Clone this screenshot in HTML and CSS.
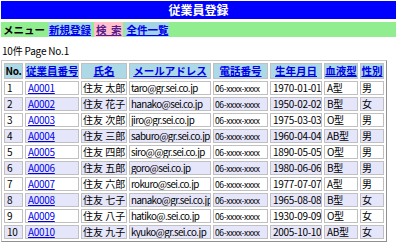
FILE: index.html
```html
<!DOCTYPE html>
<html lang="ja">
<head>
<meta charset="utf-8">
<title>従業員登録</title>
<link rel="stylesheet" href="styles.css">
</head>
<body>
<div class="title">従業員登録</div>
<div class="menu">
  <span class="mi mlabel">メニュー</span>
  <a class="mi mlink" href="#">新規登録</a>
  <a class="mi mlink visited" href="#">検&nbsp;索</a>
  <a class="mi mlink" href="#">全件一覧</a>
</div>
<p class="count">10件 Page No.1</p>
<table class="list">
  <thead>
    <tr>
      <th class="c-no">No.</th>
      <th class="c-id"><a href="#">従業員番号</a></th>
      <th class="c-name"><a href="#">氏名</a></th>
      <th class="c-mail"><a href="#">メールアドレス</a></th>
      <th class="c-tel"><a href="#">電話番号</a></th>
      <th class="c-birth"><a href="#">生年月日</a></th>
      <th class="c-blood"><a href="#">血液型</a></th>
      <th class="c-sex"><a href="#">性別</a></th>
    </tr>
  </thead>
  <tbody>
    <tr><td>1</td><td><a href="#">A0001</a></td><td class="jp">住友 太郎</td><td class="mail">taro@gr.sei.co.jp</td><td class="tel">06-xxxx-xxxx</td><td>1970-01-01</td><td>A型</td><td class="jp">男</td></tr>
    <tr class="alt"><td>2</td><td><a href="#">A0002</a></td><td class="jp">住友 花子</td><td class="mail">hanako@sei.co.jp</td><td class="tel">06-xxxx-xxxx</td><td>1950-02-02</td><td>B型</td><td class="jp">女</td></tr>
    <tr><td>3</td><td><a href="#">A0003</a></td><td class="jp">住友 次郎</td><td class="mail">jiro@gr.sei.co.jp</td><td class="tel">06-xxxx-xxxx</td><td>1975-03-03</td><td>O型</td><td class="jp">男</td></tr>
    <tr class="alt"><td>4</td><td><a href="#">A0004</a></td><td class="jp">住友 三郎</td><td class="mail">saburo@gr.sei.co.jp</td><td class="tel">06-xxxx-xxxx</td><td>1960-04-04</td><td>AB型</td><td class="jp">男</td></tr>
    <tr><td>5</td><td><a href="#">A0005</a></td><td class="jp">住友 四郎</td><td class="mail">siro@@gr.sei.co.jp</td><td class="tel">06-xxxx-xxxx</td><td>1890-05-05</td><td>O型</td><td class="jp">男</td></tr>
    <tr class="alt"><td>6</td><td><a href="#">A0006</a></td><td class="jp">住友 五郎</td><td class="mail">goro@sei.co.jp</td><td class="tel">06-xxxx-xxxx</td><td>1980-06-06</td><td>B型</td><td class="jp">男</td></tr>
    <tr><td>7</td><td><a href="#">A0007</a></td><td class="jp">住友 六郎</td><td class="mail">rokuro@sei.co.jp</td><td class="tel">06-xxxx-xxxx</td><td>1977-07-07</td><td>A型</td><td class="jp">男</td></tr>
    <tr class="alt"><td>8</td><td><a href="#">A0008</a></td><td class="jp">住友 七子</td><td class="mail">nanako@gr.sei.co.jp</td><td class="tel">06-xxxx-xxxx</td><td>1965-08-08</td><td>B型</td><td class="jp">女</td></tr>
    <tr><td>9</td><td><a href="#">A0009</a></td><td class="jp">住友 八子</td><td class="mail">hatiko@.sei.co.jp</td><td class="tel">06-xxxx-xxxx</td><td>1930-09-09</td><td>O型</td><td class="jp">女</td></tr>
    <tr class="alt"><td>10</td><td><a href="#">A0010</a></td><td class="jp">住友 九子</td><td class="mail">kyuko@gr.sei.co.jp</td><td class="tel">06-xxxx-xxxx</td><td>2005-10-10</td><td>AB型</td><td class="jp">女</td></tr>
  </tbody>
</table>
</body>
</html>
```
FILE: styles.css
```css
html, body {
  margin: 0;
  padding: 0;
  background: #ffffff;
}
body {
  padding: 1px 4px 0 1px;
  font-family: "Noto Sans CJK JP", "DejaVu Sans", sans-serif;
  font-size: 10px;
  color: #000000;
}
.title {
  background: #0000ff;
  color: #ffffff;
  font-weight: bold;
  font-size: 12px;
  text-align: center;
  height: 18px;
  line-height: 18px;
}
.menu {
  margin-top: 3px;
  background: #90ee90;
  height: 15px;
  display: flex;
  align-items: stretch;
  gap: 2px;
  padding-left: 2px;
}
.mi {
  font-weight: bold;
  font-size: 10.5px;
  line-height: 15px;
  padding: 0 1px;
  white-space: nowrap;
}
.mlabel {
  color: #000000;
  background: #90ee90;
  padding: 0 1px 0 0;
}
.mlink {
  background: #a2d4e4;
  color: #0000ee;
  text-decoration: underline;
}
.mlink.visited {
  background: #ffc0cb;
  color: #551a8b;
  padding: 0 2px;
  word-spacing: 2px;
}
.count {
  margin: 8px 0 0 1px;
  font-size: 10px;
  line-height: 12px;
  height: 12px;
  letter-spacing: -0.2px;
}
.list {
  margin-top: 3px;
  width: 385px;
  border-collapse: separate;
  border-spacing: 2px;
  border: 1px solid #c8c8c8;
  border-right-color: #909090;
  border-bottom-color: #909090;
  table-layout: fixed;
}
.list th, .list td {
  border: 1px solid #c0c0c0;
  padding: 0 1px 0 2px;
  white-space: nowrap;
  overflow: hidden;
  text-align: left;
  height: 14px;
  line-height: 12px;
  box-sizing: border-box;
  vertical-align: middle;
  letter-spacing: -0.3px;
}
.list th {
  background: #add8e6;
  font-weight: bold;
  font-size: 10.5px;
  text-align: center;
  height: 16px;
  line-height: 14px;
  letter-spacing: 0;
  padding: 0;
}
.list th.c-no {
  font-size: 10px;
  letter-spacing: -0.3px;
}
.list th a {
  color: #0000ee;
  text-decoration: underline;
}
.list td a {
  color: #0000ee;
  text-decoration: underline;
}
.list tr.alt td {
  background: #e6e6fa;
}
.list td.jp {
  font-size: 10px;
  letter-spacing: 0;
  padding-left: 1px;
}
.list td.mail {
  font-size: 9.8px;
  letter-spacing: -0.6px;
  padding: 0 0 0 1px;
}
.list td.tel {
  font-size: 8.5px;
  letter-spacing: -0.35px;
  padding: 0 0 0 1px;
}
.c-no { width: 19px; }
.c-id { width: 54px; }
.c-name { width: 46px; }
.c-mail { width: 82px; }
.c-tel { width: 55px; }
.c-birth { width: 52px; }
.c-blood { width: 34px; }
.c-sex { width: 24px; }
```
